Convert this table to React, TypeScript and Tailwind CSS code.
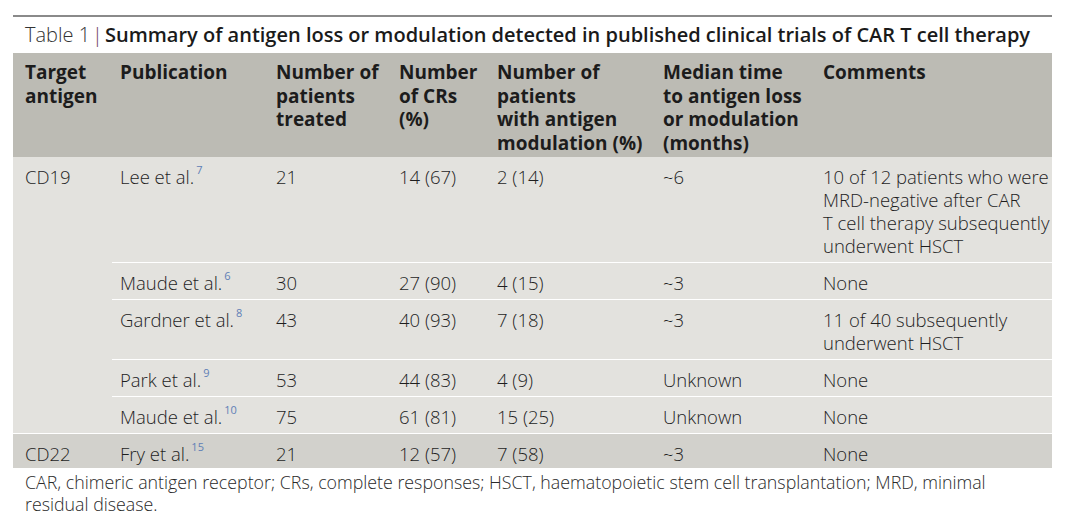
import React from 'react';

const cols = 'grid grid-cols-[99px_156px_123px_98px_166px_160px_237px]';
const subCols = 'grid grid-cols-[156px_123px_98px_166px_160px_237px]';

type Row = {
  pub: string;
  ref: string;
  treated: string;
  crs: string;
  mod: string;
  median: string;
  comments: string[];
};

const cd19Rows: Row[] = [
  {
    pub: 'Lee et al.',
    ref: '7',
    treated: '21',
    crs: '14 (67)',
    mod: '2 (14)',
    median: '~6',
    comments: ['10 of 12 patients who were', 'MRD-negative after CAR', 'T cell therapy subsequently', 'underwent HSCT'],
  },
  { pub: 'Maude et al.', ref: '6', treated: '30', crs: '27 (90)', mod: '4 (15)', median: '~3', comments: ['None'] },
  {
    pub: 'Gardner et al.',
    ref: '8',
    treated: '43',
    crs: '40 (93)',
    mod: '7 (18)',
    median: '~3',
    comments: ['11 of 40 subsequently', 'underwent HSCT'],
  },
  { pub: 'Park et al.', ref: '9', treated: '53', crs: '44 (83)', mod: '4 (9)', median: 'Unknown', comments: ['None'] },
  { pub: 'Maude et al.', ref: '10', treated: '75', crs: '61 (81)', mod: '15 (25)', median: 'Unknown', comments: ['None'] },
];

function Ref({ n }: { n: string }) {
  return <sup className="ml-[2px] text-[11px] font-normal text-[#5f80b6] align-[5px]">{n}</sup>;
}

function Cells({ row, cell }: { row: Row; cell: string }) {
  return (
    <>
      <div className={cell}>
        {row.pub}
        <Ref n={row.ref} />
      </div>
      <div className={cell}>{row.treated}</div>
      <div className={cell}>{row.crs}</div>
      <div className={cell}>{row.mod}</div>
      <div className={cell}>{row.median}</div>
      <div className={cell}>
        {row.comments.map((c) => (
          <div key={c} className="whitespace-nowrap">{c}</div>
        ))}
      </div>
    </>
  );
}

export default function App() {
  const head = 'pl-2 pt-[8px] pb-[2px]';
  return (
    <div className="w-[1080px] h-[520px] bg-white overflow-hidden font-['Open_Sans',sans-serif] text-[#1e1e1e]">
      <div className="ml-[13px] w-[1039px] pt-[15px]">
        <div className="h-[2px] bg-[#8a8a8a]" />
        <div className="pl-3 pt-[6px] pb-[6px] text-[20px] leading-[24px] whitespace-nowrap">
          <span className="font-light text-[#333]">Table 1</span>
          <span className="mx-[2px] text-[#6b3b5e] font-light">|</span>
          <span className="font-semibold text-[#1a1a1a]">
            Summary of antigen loss or modulation detected in published clinical trials of CAR T cell therapy
          </span>
        </div>

        {/* header */}
        <div className={`${cols} bg-[#bcbbb4] text-[19px] leading-[23.5px] font-bold text-[#1c1c1c] whitespace-nowrap`}>
          <div className="pl-3 pt-[8px] pb-[2px]">
            <div>Target</div>
            <div>antigen</div>
          </div>
          <div className={head}>Publication</div>
          <div className={head}>
            <div>Number of</div>
            <div>patients</div>
            <div>treated</div>
          </div>
          <div className={head}>
            <div>Number</div>
            <div>of CRs</div>
            <div>(%)</div>
          </div>
          <div className={head}>
            <div>Number of</div>
            <div>patients</div>
            <div>with antigen</div>
            <div>modulation (%)</div>
          </div>
          <div className={head}>
            <div>Median time</div>
            <div>to antigen loss</div>
            <div>or modulation</div>
            <div>(months)</div>
          </div>
          <div className={head}>Comments</div>
        </div>

        {/* CD19 group */}
        <div className="flex bg-[#e3e2de] text-[18.5px] leading-[23px] font-light">
          <div className="w-[99px] shrink-0 pl-3 pt-[8px]">CD19</div>
          <div className="flex-1">
            {cd19Rows.map((row, i) => (
              <div
                key={row.pub + row.ref}
                className={`${subCols} ${i < cd19Rows.length - 1 ? 'border-b border-white' : ''}`}
              >
                <Cells row={row} cell="pl-2 pt-[8px] pb-[5px]" />
              </div>
            ))}
          </div>
        </div>

        {/* CD22 */}
        <div className={`${cols} bg-[#d2d1cc] text-[18.5px] leading-[23px] font-light border-t border-white`}>
          <div className="pl-3 pt-[8px] pb-[3px]">CD22</div>
          <Cells
            row={{ pub: 'Fry et al.', ref: '15', treated: '21', crs: '12 (57)', mod: '7 (58)', median: '~3', comments: ['None'] }}
            cell="pl-2 pt-[8px] pb-[3px]"
          />
        </div>

        <p className="pl-3 pt-[3px] text-[17.8px] leading-[22px] font-light text-[#2a2a2a] whitespace-nowrap">
          CAR, chimeric antigen receptor; CRs, complete responses; HSCT, haematopoietic stem cell transplantation; MRD, minimal
          <br />
          residual disease.
        </p>
      </div>
    </div>
  );
}
